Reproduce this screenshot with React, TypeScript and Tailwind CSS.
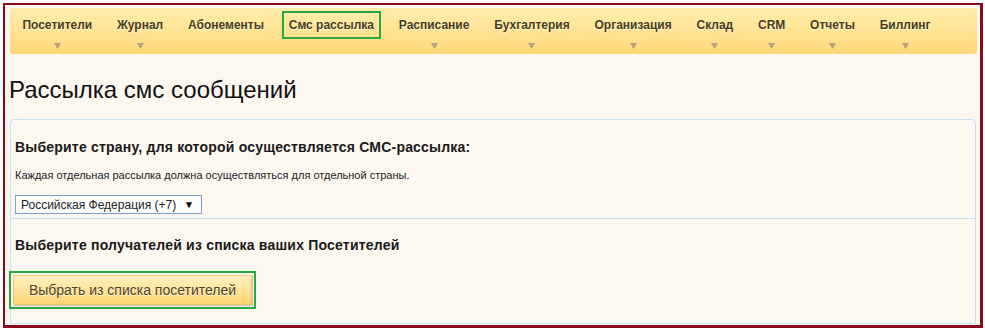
import React from 'react';

const navItems: { label: string; arrow: boolean; active?: boolean }[] = [
  { label: 'Посетители', arrow: true },
  { label: 'Журнал', arrow: true },
  { label: 'Абонементы', arrow: false },
  { label: 'Смс рассылка', arrow: false, active: true },
  { label: 'Расписание', arrow: true },
  { label: 'Бухгалтерия', arrow: true },
  { label: 'Организация', arrow: true },
  { label: 'Склад', arrow: true },
  { label: 'CRM', arrow: true },
  { label: 'Отчеты', arrow: true },
  { label: 'Биллинг', arrow: true },
];

const NavItem = ({ label, arrow, active }: { label: string; arrow: boolean; active?: boolean }) => (
  <div className="flex flex-col items-center px-[12.4px]">
    <div
      className={`h-[24px] flex items-center leading-none text-[12px] font-bold text-[#4a3c1c] [text-shadow:0_1px_1px_#fff8df] ${
        active ? 'outline-2 outline-[#27a844] -mx-[5px] px-[5px]' : ''
      }`}
    >
      {label}
    </div>
    <div className="h-[18px] flex items-center justify-center">
      {arrow && (
        <svg width="7" height="6" viewBox="0 0 7 6">
          <path d="M0 0 L7 0 L3.5 6 Z" fill="#b5a07c" />
        </svg>
      )}
    </div>
  </div>
);

export default function App() {
  return (
    <div className="w-[985px] h-[330px] bg-white pt-[3px] pl-[3px] font-['Liberation_Sans',Arial,sans-serif]">
      <div className="w-[980px] h-[325px] border-l-2 border-t-2 border-r-[3px] border-b-[3px] border-[#8a0b1c] bg-[#fcf7ef] pt-[3px] pl-[5px] pr-[3px] flex flex-col">
        <nav className="h-[46px] rounded-[3px] bg-gradient-to-b from-[#ffedac] to-[#ffd978] flex items-start pt-[5px]">
          {navItems.map((n) => (
            <NavItem key={n.label} {...n} />
          ))}
        </nav>

        <h1 className="text-[24px] leading-none text-[#111] ml-[-1px] mt-[24px] mb-[17px]">Рассылка смс сообщений</h1>

        <div className="flex-1 border border-[#c8dcf3] rounded-t-[4px] mr-[1px] mb-[1px] flex flex-col">
          <div className="h-[99px] border-b border-[#c8dcf3] pl-[4px] pt-[20px]">
            <div className="text-[14px] font-bold leading-none tracking-[0.2px] text-[#1a1a1a]">
              Выберите страну, для которой осуществляется СМС-рассылка:
            </div>
            <div className="text-[11px] leading-none text-[#222] mt-[16px]">
              Каждая отдельная рассылка должна осуществляться для отдельной страны.
            </div>
            <div className="mt-[14px] w-[187px] h-[19px] bg-white border border-[#7f9ccf] flex items-center justify-between pl-[5px] pr-[7px] text-[12px] text-[#222]">
              <span>Российская Федерация (+7)</span>
              <span className="text-[10px] text-black">▼</span>
            </div>
          </div>
          <div className="pl-[4px] pt-[19px]">
            <div className="text-[14px] font-bold leading-none tracking-[0.2px] text-[#1a1a1a]">
              Выберите получателей из списка ваших Посетителей
            </div>
            <div className="mt-[19px] -ml-[6px] w-[247px] h-[38px] border-2 border-[#27a844] p-[2px]">
              <button className="w-full h-full bg-gradient-to-b from-[#fff2c0] to-[#ffd470] border border-[#ecc878] shadow-[1px_1px_1px_rgba(150,120,60,0.4)] text-[14px] text-[#4f4228] [text-shadow:0_1px_0_#fff6d8]">
                Выбрать из списка посетителей
              </button>
            </div>
          </div>
        </div>
      </div>
    </div>
  );
}
